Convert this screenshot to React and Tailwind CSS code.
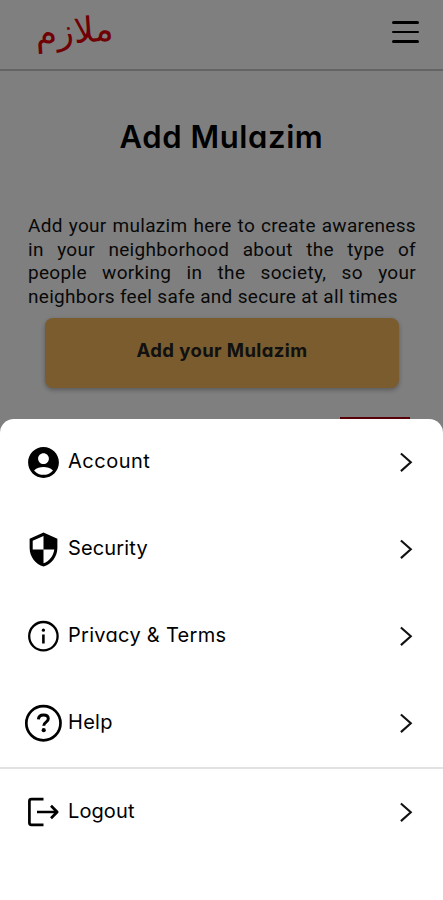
import React from 'react';
import { MdAccountCircle, MdSecurity } from 'react-icons/md';

const InfoIcon = () => (
  <svg width="38" height="38" viewBox="0 0 38 38" fill="none" stroke="#000">
    <circle cx="19.4" cy="19.2" r="14.2" strokeWidth="2.3" />
    <path d="M19.4 17.5v9" strokeWidth="2.6" />
    <circle cx="19.4" cy="13.2" r="1.6" fill="#000" stroke="none" />
  </svg>
);

const HelpIcon = () => (
  <svg width="38" height="38" viewBox="0 0 38 38" fill="none" stroke="#000">
    <circle cx="19.4" cy="19.2" r="17.1" strokeWidth="2.7" />
    <path
      d="M14.4 15.4c.2-2.9 2.2-4.5 5.1-4.5 2.9 0 4.8 1.5 4.8 3.9 0 3.3-4.6 3.3-4.6 6.9"
      strokeWidth="3"
    />
    <circle cx="19.7" cy="26.2" r="2.1" fill="#000" stroke="none" />
  </svg>
);

const LogoutIcon = () => (
  <svg
    width="38"
    height="38"
    viewBox="0 0 38 38"
    fill="none"
    stroke="#000"
    strokeWidth="2.7"
    strokeLinejoin="round"
  >
    <path d="M19.5 6.2H7.4a2 2 0 0 0-2 2v21.6a2 2 0 0 0 2 2h12.1" />
    <path d="M13 19h20M27 12.8l6.2 6.2-6.2 6.2" />
  </svg>
);

const Chevron = () => (
  <svg width="14" height="20" viewBox="0 0 14 20" fill="none" stroke="#111" strokeWidth="2.1">
    <path d="M1.9 1.5 11.8 10.3 1.9 19.1" />
  </svg>
);

const menuItems = [
  {
    label: 'Account',
    icon: <MdAccountCircle size={37} className="mt-px" />,
    spacing: 'tracking-[0.5px]',
  },
  {
    label: 'Security',
    icon: <MdSecurity size={37} className="mt-0.5" />,
    spacing: 'tracking-[0.15px]',
  },
  { label: 'Privacy & Terms', icon: <InfoIcon />, spacing: 'tracking-[0.3px]' },
  { label: 'Help', icon: <HelpIcon />, spacing: 'tracking-[0.3px]' },
];

function MenuRow({ label, icon, spacing }) {
  return (
    <button className="flex h-[87px] w-full items-center pr-[30px] pb-[1.5px] pl-6 text-left text-black">
      <span className="flex w-[38px] shrink-0 justify-center">{icon}</span>
      <span className={`ml-1.5 flex-1 pb-[2px] text-[20px] leading-7 whitespace-nowrap ${spacing}`}>
        {label}
      </span>
      <Chevron />
    </button>
  );
}

export default function App() {
  return (
    <div className="relative h-[900px] w-full overflow-hidden bg-white font-['Inter','Lato',sans-serif] [font-feature-settings:'cv11']">
      <header className="flex h-[71px] items-start justify-between border-b-2 border-[#c8c8c8] pr-6 pl-[35px]">
        <span
          lang="ar"
          dir="rtl"
          className="-rotate-4 font-['DejaVu_Sans',sans-serif] text-[35px] leading-[62px] text-[#e00008]"
        >
          ملازم
        </span>
        <span className="mt-[21px] flex w-[27px] flex-col gap-[7px]">
          <span className="h-[2.7px] rounded bg-black" />
          <span className="h-[2.7px] rounded bg-black" />
          <span className="h-[2.7px] rounded bg-black" />
        </span>
      </header>

      <main className="flex flex-col px-7">
        <h1 className="mt-[46px] text-center text-[31px] leading-10 font-semibold tracking-[0.6px] text-black">
          Add Mulazim
        </h1>
        <p className="-mr-px mt-[57px] text-justify font-['Roboto',sans-serif] text-[19px] leading-[23.5px] tracking-[0.31px] text-[#111] [font-feature-settings:normal]">
          Add your mulazim here to create awareness in your neighborhood about the type of people
          working in the society, so your neighbors feel safe and secure at all times
        </p>
        <button className="mr-4 ml-[17px] mt-2.5 h-[70px] rounded-lg bg-[#f4b85c] pb-1 text-[18.5px] font-bold tracking-[0.4px] text-[#222] shadow-[0_2px_5px_rgba(0,0,0,0.3)]">
          Add your Mulazim
        </button>
        <div className="mt-[29px] mr-[5px] h-10 w-[70px] self-end bg-[#b00010]" />
      </main>

      <div className="absolute inset-0 flex flex-col justify-end bg-black/50">
        <nav className="h-[481px] rounded-t-[14px] bg-white">
          {menuItems.map((item) => (
            <MenuRow key={item.label} {...item} />
          ))}
          <div className="border-t-2 border-[#e2e2e2]">
            <MenuRow label="Logout" icon={<LogoutIcon />} spacing="tracking-[0.1px]" />
          </div>
        </nav>
      </div>
    </div>
  );
}
